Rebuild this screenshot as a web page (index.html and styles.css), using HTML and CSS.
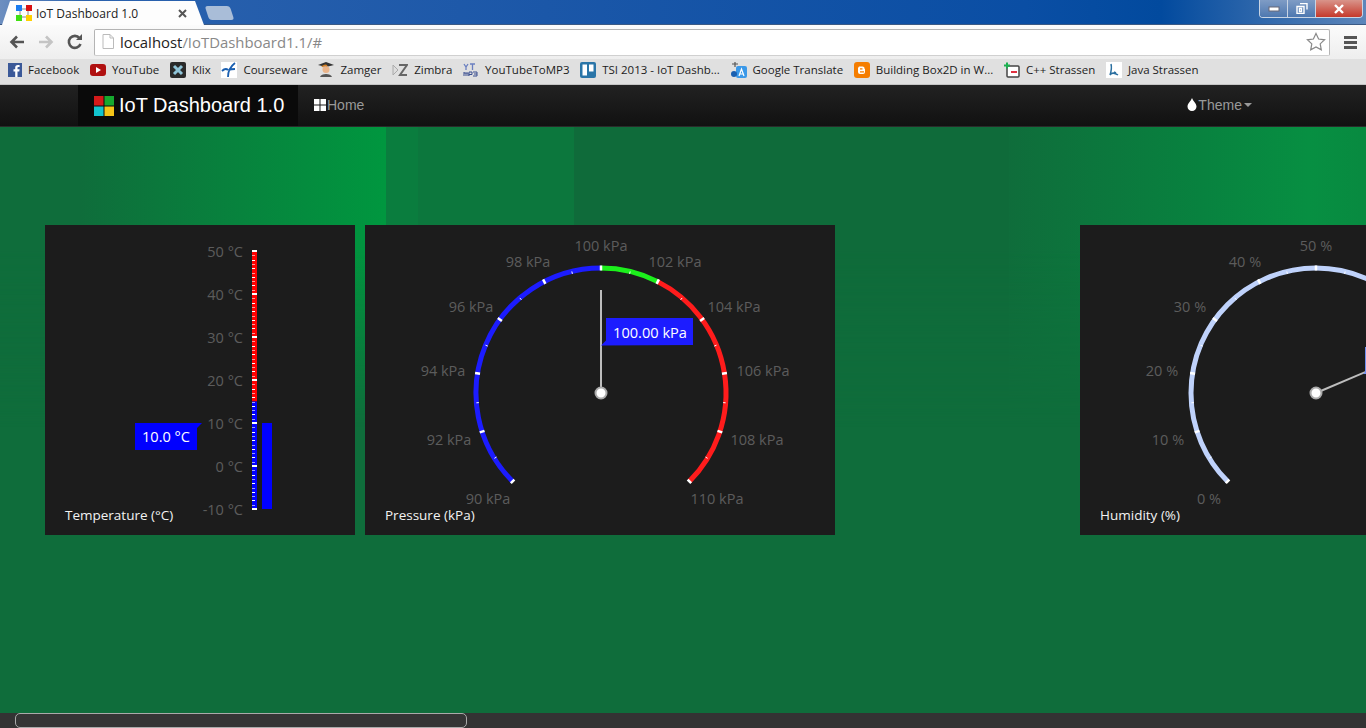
FILE: index.html
```html
<!DOCTYPE html>
<html lang="en">
<head>
    <meta charset="UTF-8">
    <meta name="viewport" content="width=device-width, initial-scale=1.0">
    <title>IoT Dashboard 1.0</title>
    <link rel="stylesheet" href="styles.css">
</head>
<body>
    <div class="chrome">
        <div class="titlebar">
            <div class="tab">
                <svg class="fav" width="16" height="16" viewBox="0 0 16 16">
                    <path d="M4 4h8M4 4v8M12 4v8M4 12h8" stroke="#888" fill="none"/>
                    <rect x="0" y="0" width="6" height="6" fill="#1a7cf0"/>
                    <rect x="10" y="0" width="6" height="6" fill="#d81010"/>
                    <rect x="0" y="10" width="6" height="6" fill="#3fe010"/>
                    <rect x="10" y="10" width="6" height="6" fill="#ffd000"/>
                </svg>
                <span class="tab-title">IoT Dashboard 1.0</span>
                <svg class="tab-close" width="9" height="9" viewBox="0 0 9 9"><path d="M1 1l7 7M8 1l-7 7" stroke="#555" stroke-width="2"/></svg>
            </div>
            <div class="tab-new"></div>
            <div class="winbtns">
                <div class="winbtn min"><svg width="12" height="6" viewBox="0 0 12 6"><rect x="1" y="1" width="10" height="4" fill="#fff" stroke="#667"/></svg></div>
                <div class="winbtn max"><svg width="12" height="11" viewBox="0 0 12 11"><path d="M4 .5h7v6M1 3.500h7v7h-7z M3.500 5.500h2v3h-2z" fill="none" stroke="#fff" stroke-width="1.400"/></svg></div>
                <div class="winbtn close"><svg width="12" height="10" viewBox="0 0 12 10"><path d="M2 1l8 8M10 1l-8 8" stroke="#fff" stroke-width="2.400"/></svg></div>
            </div>
        </div>
        <div class="toolbar">
            <svg class="nav-icon" width="18" height="18" viewBox="0 0 18 18"><path d="M16 9H4M9 3.500L3.500 9 9 14.500" fill="none" stroke="#555" stroke-width="2.600"/></svg>
            <svg class="nav-icon" width="18" height="18" viewBox="0 0 18 18"><path d="M2 9h12M9 3.500L14.500 9 9 14.500" fill="none" stroke="#c4c4c4" stroke-width="2.600"/></svg>
            <svg class="nav-icon" width="18" height="18" viewBox="0 0 18 18"><path d="M14.500 11A6 6 0 1 1 13.500 5" fill="none" stroke="#555" stroke-width="2.600"/><path d="M10 7h6V1z" fill="#555"/></svg>
            <div class="omnibox">
                <svg width="12" height="15" viewBox="0 0 12 15"><path d="M1 .5h7l3.500 3.500v10.500h-10.500z" fill="#fff" stroke="#bbb"/><path d="M8 .5v3.500h3.500" fill="none" stroke="#bbb"/></svg>
                <span class="url"><span class="host">localhost</span>/IoTDashboard1.1/#</span>
                <svg class="star" width="20" height="19" viewBox="0 0 20 19"><path d="M10 1.500l2.600 5.500 6 .8-4.400 4.100 1.100 5.900L10 14.900l-5.300 2.900 1.100-5.900L1.400 7.800l6-.8z" fill="#fff" stroke="#888" stroke-width="1.200"/></svg>
            </div>
            <div class="menu-icon"><i></i><i></i><i></i></div>
        </div>
        <div class="bookmarks">
            <div class="bm"><svg width="14" height="14" viewBox="0 0 14 14"><rect width="14" height="14" fill="#3b5998"/><path d="M9.500 14V8.500h1.800l.3-2.200H9.500V5c0-.7.2-1 1-1h1.100V2.100H10C8 2.100 7.200 3.200 7.200 4.800v1.500H5.500v2.200h1.700V14z" fill="#fff"/></svg>Facebook</div>
            <div class="bm"><svg width="16" height="14" viewBox="0 0 16 14"><rect y="1" width="16" height="12" rx="3" fill="#b01010"/><path d="M6 4l5 3-5 3z" fill="#fff"/></svg>YouTube</div>
            <div class="bm"><svg width="16" height="16" viewBox="0 0 16 16"><rect width="16" height="16" rx="2" fill="#2a2a2a"/><path d="M4 4l8 8M12 4l-8 8" stroke="#8fc4d8" stroke-width="3"/></svg>Klix</div>
            <div class="bm"><svg width="16" height="16" viewBox="0 0 16 16"><rect width="16" height="16" fill="#fff"/><path d="M1 9c3-3 5-2 6-1M7 15c0-6 3-11 7-14M8 8c2-1 4-1 6-1" fill="none" stroke="#1a5fb0" stroke-width="1.800"/></svg>Courseware</div>
            <div class="bm"><svg width="16" height="16" viewBox="0 0 16 16"><path d="M0 3l8-3 8 3-8 2z" fill="#333"/><circle cx="8" cy="7.500" r="3.500" fill="#eab48a"/><path d="M4 5c1-2 4-2 5-1" stroke="#d88020" fill="none" stroke-width="1.500"/><path d="M2 15c1-4 11-4 12 0z" fill="#555"/></svg>Zamger</div>
            <div class="bm"><svg width="16" height="14" viewBox="0 0 16 14"><path d="M1 2l5 5-5 5z" fill="#ddd" stroke="#aaa"/><path d="M7 2h8l-7 10h7" fill="none" stroke="#666" stroke-width="2"/></svg>Zimbra</div>
            <div class="bm"><svg width="16" height="14" viewBox="0 0 16 14"><path d="M1 1l2 3 2-3M3 4v3M7 1h5M9.500 1v6" fill="none" stroke="#6a7fc0" stroke-width="1.300"/><path d="M1 13v-4M1 10h4v3M3 10v3M6 13v-4h3v2.500H6M10 9h4v4h-4M14 11h-3" fill="none" stroke="#3a4f90"/></svg>YouTubeToMP3</div>
            <div class="bm"><svg width="16" height="16" viewBox="0 0 16 16"><rect width="16" height="16" rx="2" fill="#2a75a8"/><rect x="2.500" y="2.500" width="4.500" height="11" fill="#fff"/><rect x="9" y="2.500" width="4.500" height="7" fill="#fff"/></svg>TSI 2013 - IoT Dashb...</div>
            <div class="bm"><svg width="16" height="16" viewBox="0 0 16 16"><rect x="5" y="4" width="11" height="12" rx="2" fill="#3a98e8"/><path d="M8 14l2.500-7 2.500 7M9 12h3" fill="none" stroke="#fff" stroke-width="1.200"/><path d="M1 2h6M4 0v5" stroke="#555" stroke-width="1.200"/><circle cx="3" cy="12" r="3" fill="#1a5fb0"/></svg>Google Translate</div>
            <div class="bm"><svg width="16" height="16" viewBox="0 0 16 16"><rect width="16" height="16" rx="3" fill="#f57d00"/><path d="M5 4.500h3.500a2 2 0 0 1 2 2.500h.500v3a2 2 0 0 1-2 2H6a2 2 0 0 1-2-2V6z" fill="#fff"/><path d="M6 6.800h2.500M6 9.800h4" stroke="#f57d00" stroke-width="1.300"/></svg>Building Box2D in W...</div>
            <div class="bm"><svg width="16" height="16" viewBox="0 0 16 16"><rect x="3" y="4" width="12" height="11" rx="1" fill="#fff" stroke="#444" stroke-width="1.500"/><path d="M0 3.500h6M3 .5v6" stroke="#1cb050" stroke-width="2"/><path d="M7 10h6" stroke="#e03040" stroke-width="2"/></svg>C++ Strassen</div>
            <div class="bm"><svg width="16" height="16" viewBox="0 0 16 16"><rect width="16" height="16" fill="#fff"/><path d="M5 2c1 4 0 8-1 11M4 13c2-3 5-2 8 0M8 10l2 1" fill="none" stroke="#2a6fa0" stroke-width="1.500"/></svg>Java Strassen</div>
        </div>
    </div>

    <nav class="navbar">
        <a class="brand">
            <svg width="20" height="20" viewBox="0 0 20 20">
                <rect x="0" y="0" width="9.500" height="9.500" fill="#d41a1a"/>
                <rect x="10.500" y="0" width="9.500" height="9.500" fill="#16a92f"/>
                <rect x="0" y="10.500" width="9.500" height="9.500" fill="#12c4cf"/>
                <rect x="10.500" y="10.500" width="9.500" height="9.500" fill="#f5c518"/>
            </svg>
            IoT Dashboard 1.0
        </a>
        <a class="nav-link">
            <svg width="12" height="12" viewBox="0 0 12 12"><path d="M0 0h5.500v5.500H0zM6.500 0H12v5.500H6.500zM0 6.500h5.500V12H0zM6.500 6.500H12V12H6.500z" fill="#fff"/></svg>Home
        </a>
        <a class="nav-link theme">
            <svg width="10" height="13" viewBox="0 0 10 13"><path d="M5 0C4 3 .5 5.500.5 8.500a4.500 4.500 0 0 0 9 0C9.500 5.500 6 3 5 0z" fill="#fff"/></svg>Theme<b class="caret"></b>
        </a>
    </nav>

    <main class="board">
        <div class="card temp">
            <svg id="thermo" width="310" height="310" viewBox="0 0 310 310"></svg>
            <div class="card-title">Temperature (°C)</div>
        </div>
        <div class="card pressure">
            <svg id="pressure" width="470" height="310" viewBox="0 0 470 310"></svg>
            <div class="card-title">Pressure (kPa)</div>
        </div>
        <div class="card humidity">
            <svg id="humidity" width="286" height="310" viewBox="0 0 286 310"></svg>
            <div class="card-title">Humidity (%)</div>
        </div>
    </main>

    <div class="hscroll"><div class="hscroll-thumb"></div></div>

    <script src="gauge.js"></script>
</body>
</html>
```

FILE: styles.css
```css
html, body {
    margin: 0;
    height: 100%;
    overflow: hidden;
}
body {
    display: flex;
    flex-direction: column;
    font-family: "Liberation Sans", Arial, sans-serif;
    background: #0f6d3b;
}

/* browser frame */
.chrome {
    flex: none;
    height: 85px;
    display: flex;
    flex-direction: column;
    background: #f2f2f2;
}
.titlebar {
    height: 25px;
    display: flex;
    align-items: flex-end;
    padding-left: 2px;
    position: relative;
    background: linear-gradient(90deg, #6d8fc0 0, #2b62ae 6%, #1b57a8 40%, #0a4ea4 75%, #024a9e 85%, #5d86ba 100%);
    border-bottom: 1px solid #3b5a85;
    box-sizing: border-box;
}
.tab {
    width: 202px;
    height: 24px;
    margin-bottom: -1px;
    background: #fdfdfd;
    clip-path: polygon(8px 0, 193px 0, 202px 100%, 0 100%);
    display: flex;
    align-items: center;
    padding: 0 17px 0 14px;
    box-sizing: border-box;
}
.tab-title {
    flex: 1;
    margin-left: 4px;
    font: 12px "Open Sans", "Noto Sans", sans-serif;
    color: #222;
}
.tab-new {
    width: 25px;
    height: 14px;
    margin: 0 0 4px 3px;
    background: #a9bdd8;
    border-radius: 3px;
    transform: skewX(18deg);
}
.winbtns {
    position: absolute;
    top: 0;
    right: 3px;
    height: 17px;
    display: flex;
    border: 1px solid #c8d4e4;
    border-top: none;
    border-radius: 0 0 4px 4px;
    overflow: hidden;
}
.winbtn {
    display: flex;
    align-items: center;
    justify-content: center;
}
.winbtn.min, .winbtn.max {
    width: 27px;
    background: linear-gradient(#7f9cc5, #4e78b0);
    border-right: 1px solid #c8d4e4;
}
.winbtn.close {
    width: 46px;
    background: linear-gradient(#d9948a, #c5392b);
}

.toolbar {
    height: 34px;
    display: flex;
    align-items: center;
    padding: 0 6px 0 8px;
    gap: 11px;
    background: linear-gradient(#fbfbfb, #eeeeee);
    box-sizing: border-box;
}
.omnibox {
    width: 1236px;
    height: 27px;
    margin-left: -1px;
    display: flex;
    align-items: center;
    gap: 6px;
    padding: 0 3px 1px 7px;
    background: #fff;
    border: 1px solid #b4b4b4;
    border-bottom-color: #d0d0d0;
    border-radius: 2px;
    box-sizing: border-box;
}
.url {
    flex: 1;
    font: 14.900px "Open Sans", "Noto Sans", sans-serif;
    color: #888;
}
.host {
    color: #222;
}
.menu-icon {
    display: flex;
    flex-direction: column;
    gap: 2px;
    width: 13px;
    margin-left: 3px;
}
.menu-icon i {
    height: 3px;
    background: #555;
}

.bookmarks {
    flex: 1;
    display: flex;
    align-items: center;
    padding: 0 0 4px 8px;
    gap: 10.700px;
    background: #e0e0e0;
    border-bottom: 1px solid #c4c4c4;
    box-sizing: border-box;
}
.bm {
    display: flex;
    align-items: center;
    gap: 6px;
    font: 11.500px "Open Sans", "Noto Sans", sans-serif;
    color: #1c1c1c;
    white-space: nowrap;
}

/* page navbar */
.navbar {
    flex: none;
    height: 42px;
    display: flex;
    align-items: center;
    padding-left: 78px;
    background: linear-gradient(#222, #111);
    border-bottom: 1px solid #2a2a2a;
    box-sizing: border-box;
}
.brand {
    height: 41px;
    width: 220px;
    display: flex;
    align-items: center;
    gap: 5px;
    padding-left: 16px;
    box-sizing: border-box;
    background: #0a0a0a;
    color: #fff;
    font-size: 20px;
}
.nav-link {
    display: flex;
    align-items: center;
    margin: -2px 0 0 16px;
    color: #999;
    font-size: 14px;
}
.nav-link svg {
    margin-right: 1px;
}
.theme {
    margin-left: 823px;
}
.caret {
    margin-left: 2px;
    border-top: 4px solid #999;
    border-left: 4px solid transparent;
    border-right: 4px solid transparent;
}

/* dashboard */
.board {
    flex: 1;
    min-height: 0;
    display: flex;
    align-items: flex-start;
    padding: 98px 0 0 45px;
    overflow: hidden;
    position: relative;
    background: #0f6d3b;
}
.board::before {
    content: "";
    position: absolute;
    left: 0;
    right: 0;
    top: 0;
    height: 300px;
    background:
        linear-gradient(90deg, #0f6d3b 0, #0f6d3b 80px, #00973f 100%) 0 0 / 386px 100% no-repeat,
        linear-gradient(#0a7d3e, #0a7d3e) 386px 0 / 32px 100% no-repeat,
        linear-gradient(#0c773d, #0c773d) 418px 0 / 156px 100% no-repeat,
        linear-gradient(#0f6b3a, #0f6b3a) 574px 0 / 435px 100% no-repeat,
        linear-gradient(90deg, #0f6d3b 0, #08823f 54%, #078f42 84%, #088a40 100%) 1009px 0 / 357px 100% no-repeat;
    -webkit-mask-image: linear-gradient(#000 40%, transparent);
    mask-image: linear-gradient(#000 40%, transparent);
}
.card {
    flex: none;
    position: relative;
    height: 310px;
    background: #1c1c1c;
}
.card svg {
    display: block;
}
.temp {
    width: 310px;
    margin-right: 10px;
}
.pressure {
    width: 470px;
    margin-right: 245px;
}
.humidity {
    width: 286px;
}
.card-title {
    position: absolute;
    left: 20px;
    top: 281px;
    font: 13.500px "Open Sans", "Noto Sans", sans-serif;
    color: #f2f2f2;
}
.scale-text {
    font: 14.500px "Open Sans", "Noto Sans", sans-serif;
    fill: #5c5c5c;
}
.value-text {
    font: 14.600px "Open Sans", "Noto Sans", sans-serif;
    fill: #fff;
}

.hscroll {
    flex: none;
    height: 15px;
    background: #333;
    padding-left: 15px;
}
.hscroll-thumb {
    width: 450px;
    height: 13px;
    border: 1px solid #aaa;
    border-radius: 5px;
    background: #353535;
}
```

FILE: gauge.js
```js
const NS = 'http://www.w3.org/2000/svg'

function add(svg, tag, attrs, text) {
  let el = document.createElementNS(NS, tag)
  for (let k in attrs) el.setAttribute(k, attrs[k])
  if (text) el.textContent = text
  svg.appendChild(el)
  return el
}

// angle in degrees, 0 is straight up
function pt(cx, cy, r, deg) {
  let a = deg * Math.PI / 180
  return [cx + r * Math.sin(a), cy - r * Math.cos(a)]
}

function arc(svg, cx, cy, r, from, to, color, width) {
  let a = pt(cx, cy, r, from)
  let b = pt(cx, cy, r, to)
  let large = to - from > 180 ? 1 : 0
  add(svg, 'path', {
    d: `M${a[0]} ${a[1]}A${r} ${r} 0 ${large} 1 ${b[0]} ${b[1]}`,
    fill: 'none', stroke: color, 'stroke-width': width
  })
}

function tick(svg, cx, cy, r1, r2, deg, width) {
  let a = pt(cx, cy, r1, deg)
  let b = pt(cx, cy, r2, deg)
  add(svg, 'line', { x1: a[0], y1: a[1], x2: b[0], y2: b[1], stroke: '#fff', 'stroke-width': width })
}

function dial(svg, cx, cy, sectors, labels, needle) {
  sectors.forEach(s => arc(svg, cx, cy, 125, s[0], s[1], s[2], 5))
  for (let i = 0; i <= 20; i++) {
    let deg = -135 + i * 13.5
    if (i % 2 === 0) tick(svg, cx, cy, 122.5, 127.5, deg, 2.500)
    else tick(svg, cx, cy, 122.5, 125, deg, 1)
  }
  // labels are [text, x offset, y offset] from the dial centre
  labels.forEach(l => {
    add(svg, 'text', { x: cx + l[1], y: cy + l[2], class: 'scale-text', 'text-anchor': 'middle' }, l[0])
  })
  let tip = pt(cx, cy, 103, needle)
  add(svg, 'line', { x1: cx, y1: cy, x2: tip[0], y2: tip[1], stroke: '#bdbdbd', 'stroke-width': 2 })
  add(svg, 'circle', { cx: cx, cy: cy, r: 5.500, fill: '#fff', stroke: '#aaa', 'stroke-width': 2 })
}

function thermometer(svg) {
  let top = 26, bottom = 284
  let y = t => top + (50 - t) * (bottom - top) / 60
  add(svg, 'rect', { x: 207, y: top, width: 5, height: y(15) - top, fill: '#f00' })
  add(svg, 'rect', { x: 207, y: y(15), width: 5, height: bottom - y(15), fill: '#00f' })
  for (let t = -10; t <= 50; t++) {
    let major = t % 10 === 0
    add(svg, 'rect', {
      x: 207, y: Math.round(y(t)) - (major ? 1 : 0),
      width: major ? 5 : 3, height: major ? 2 : 1,
      fill: t % 2 === 0 || major ? '#fff' : 'rgba(255,255,255,.6)'
    })
    if (major) {
      add(svg, 'text', { x: 198, y: y(t) + 6, class: 'scale-text', 'text-anchor': 'end' }, `${t} °C`)
    }
  }
  add(svg, 'rect', { x: 217, y: y(10), width: 10, height: bottom - y(10), fill: '#00f' })
  add(svg, 'path', { d: `M90 ${y(10)}h67l-5 5v22h-62z`, fill: '#00f' })
  add(svg, 'text', { x: 121, y: y(10) + 19, class: 'value-text', 'text-anchor': 'middle' }, '10.0 °C')
}

thermometer(document.getElementById('thermo'))

let p = document.getElementById('pressure')
dial(p, 236, 168, [[-135, 0, '#1c1cff'], [0, 27, '#1cf01c'], [27, 135, '#ff1c1c']], [
  ['90 kPa', -113, 111], ['92 kPa', -152, 52], ['94 kPa', -158, -17], ['96 kPa', -130, -81],
  ['98 kPa', -73, -126], ['100 kPa', 0, -142], ['102 kPa', 74, -126], ['104 kPa', 133, -81],
  ['106 kPa', 162, -17], ['108 kPa', 156, 52], ['110 kPa', 116, 111]
], 0)
add(p, 'path', { d: 'M236 120.500l5-5V93h87v27z', fill: '#1c1cff' })
add(p, 'text', { x: 285, y: 113, class: 'value-text', 'text-anchor': 'middle' }, '100.00 kPa')

// the dial runs off the right edge of the window, only its left half shows
let h = document.getElementById('humidity')
dial(h, 236, 168, [[-135, 135, '#bfd2fb']], [
  ['0 %', -107, 111], ['10 %', -148, 52], ['20 %', -154, -17],
  ['30 %', -126, -81], ['40 %', -71, -126], ['50 %', 0, -142]
], 67)
add(h, 'path', { d: 'M283 149l2-2V122h10v27z', fill: '#6f8ff0' })
```
